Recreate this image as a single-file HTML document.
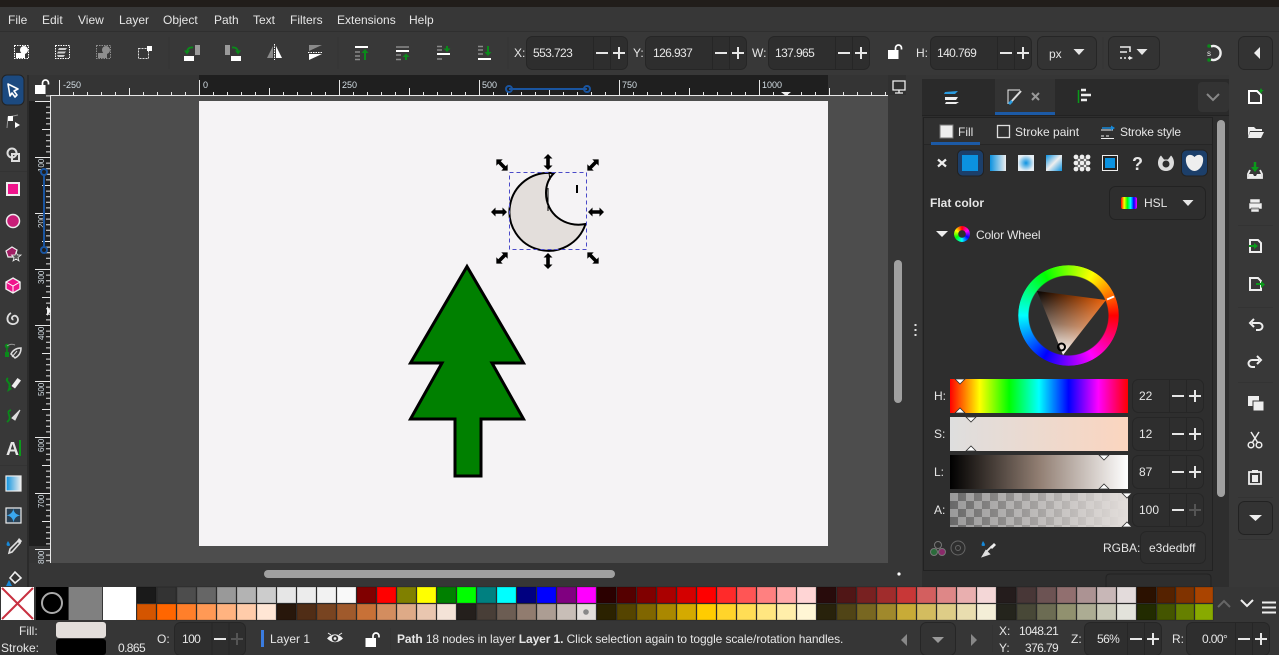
<!DOCTYPE html>
<html><head><meta charset="utf-8"><style>
html,body{margin:0;padding:0;background:#363636;width:1279px;height:655px;overflow:hidden}
svg{position:absolute;left:0;top:0;display:block}
text{font-family:"Liberation Sans",sans-serif;font-size:12px;fill:#e6e6e6}
text.n{letter-spacing:-.6px}
.r text{font-size:9px;fill:#d5dfe6}
.r text.v{font-size:8px}
.b{stroke:#262626;fill:#2e2e2e}
.wheel{position:absolute;border-radius:50%}
</style></head><body>
<svg width="1279" height="655" viewBox="0 0 1279 655">
<defs>
<pattern id="hr" width="140" height="20" patternUnits="userSpaceOnUse" x="59" y="75"><path d="M.5 5V20M14.5 17V20M28.5 17V20M42.5 17V20M56.5 17V20M70.5 13V20M84.5 17V20M98.5 17V20M112.5 17V20M126.5 17V20" stroke="#e8e8e8" fill="none"/></pattern>
<pattern id="vr" width="21" height="56" patternUnits="userSpaceOnUse" x="29" y="101"><path d="M6 .5H21M17 6.1H21M17 11.7H21M17 17.3H21M17 22.9H21M13 28.5H21M17 34.1H21M17 39.7H21M17 45.3H21M17 50.9H21" stroke="#e8e8e8" fill="none"/></pattern>
<pattern id="ck" width="16" height="16" patternUnits="userSpaceOnUse" x="950" y="493"><rect width="16" height="16" fill="#9a9a9a"/><rect x="8" width="8" height="8" fill="#686868"/><rect y="8" width="8" height="8" fill="#686868"/></pattern>
<linearGradient id="gh" x1="0" x2="1" y1="0" y2="0"><stop offset="0" stop-color="#f00"/><stop offset=".167" stop-color="#ff0"/><stop offset=".333" stop-color="#0f0"/><stop offset=".5" stop-color="#0ff"/><stop offset=".667" stop-color="#00f"/><stop offset=".833" stop-color="#f0f"/><stop offset="1" stop-color="#f00"/></linearGradient>
<linearGradient id="gs"><stop offset="0" stop-color="#dedede"/><stop offset="1" stop-color="#fbd5bf"/></linearGradient>
<linearGradient id="gl"><stop offset="0" stop-color="#000"/><stop offset=".5" stop-color="#917e72"/><stop offset="1" stop-color="#fff"/></linearGradient>
<linearGradient id="ga"><stop offset="0" stop-color="#e3dedb" stop-opacity="0"/><stop offset="1" stop-color="#e3dedb"/></linearGradient>
<linearGradient id="lg"><stop offset="0" stop-color="#0b92e0"/><stop offset="1" stop-color="#eee"/></linearGradient>
<radialGradient id="rg"><stop offset="0" stop-color="#0b92e0"/><stop offset="1" stop-color="#e6eef4"/></radialGradient>
<linearGradient id="dg" x1="0" y1="0" x2="1" y2="1"><stop offset="0" stop-color="#0b92e0"/><stop offset=".5" stop-color="#eee"/><stop offset="1" stop-color="#0b92e0"/></linearGradient>
<linearGradient id="hs"><stop offset="0" stop-color="#f00"/><stop offset=".2" stop-color="#ff0"/><stop offset=".4" stop-color="#0f0"/><stop offset=".6" stop-color="#0ff"/><stop offset=".8" stop-color="#00f"/><stop offset="1" stop-color="#f0f"/></linearGradient>
<g id="pm" fill="none"><path d="M-34.5 -17V17M-17.5 -17V17" stroke="#262626"/><path d="M-32 0H-20M-15 0H-3M-9 -6V6" stroke="#e6e6e6" stroke-width="2"/></g>
<path id="ar" d="M-8 0L-3.5 -4.5V-1.8H3.5V-4.5L8 0L3.5 4.5V1.8H-3.5V4.5Z" fill="#000"/>
<path id="dn" d="M-5.500 -3H5.500L0 3Z" fill="#e6e6e6"/>
<path id="mkd" d="M-5 0H5L0 5Z" fill="#fff" stroke="#333" stroke-width=".8"/>
<path id="mku" d="M-5 0H5L0 -5Z" fill="#fff" stroke="#333" stroke-width=".8"/>
<g id="lock"><rect x="-5.500" y="-3" width="10.500" height="9" fill="#fff"/><path d="M2 -3V-5A3 3 0 0 1 8 -5V-3.500" fill="none" stroke="#fff" stroke-width="1.700"/></g>
</defs>

<!-- chrome -->
<rect width="1279" height="655" fill="#363636"/>
<rect width="1279" height="7" fill="#211d1a"/>
<rect y="7" width="1279" height="24" fill="#373737"/>
<rect y="31" width="1279" height="1" fill="#2f2f2f"/>
<rect y="32" width="1279" height="43" fill="#383838"/>
<path d="M169 37V69M338 37V69M508 37V69M1103 37V69" stroke="#333" stroke-width="1"/>
<g>
<text x="8" y="24">File</text><text x="42" y="24">Edit</text><text x="78" y="24">View</text><text x="119" y="24">Layer</text><text x="163" y="24">Object</text><text x="214" y="24">Path</text><text x="253" y="24">Text</text><text x="290" y="24">Filters</text><text x="337" y="24">Extensions</text><text x="409" y="24">Help</text>
</g>

<!-- toolbar icons -->
<g fill="none">
<rect x="14.500" y="45.500" width="14" height="13" stroke="#fff" stroke-dasharray="1.500 1"/><circle cx="24" cy="50" r="4" fill="#fff"/><rect x="16" y="53" width="9" height="5" fill="#fff"/>
<rect x="55.500" y="45.500" width="14" height="13" stroke="#fff" stroke-dasharray="1.500 1"/><path d="M59 48H67L65.500 50H58ZM58 51.500H66L64.500 53.500H57ZM57 55H65L63.500 57H58Z" fill="#ccc"/>
<rect x="96.500" y="45.500" width="14" height="13" stroke="#8d8d8d" stroke-dasharray="1.500 1"/><circle cx="106" cy="50" r="4" fill="#8d8d8d"/><rect x="98" y="53" width="9" height="5" fill="#8d8d8d"/>
<rect x="138.500" y="48.500" width="10" height="10" stroke="#ddd" stroke-dasharray="2 1"/><rect x="147" y="46" width="5" height="5" fill="#fff"/>
<rect x="195" y="45" width="5" height="10" fill="#9a9a9a"/><rect x="184" y="56" width="10" height="5" fill="#fff"/><path d="M193 47.500C189 47 187 49 187 53" stroke="#0a8a1a" stroke-width="1.800"/><path d="M184 50.500H190L187 54.500Z" fill="#0a8a1a"/>
<rect x="225" y="45" width="5" height="10" fill="#9a9a9a"/><rect x="231" y="56" width="10" height="5" fill="#fff"/><path d="M232 47.500C236 47 238 49 238 53" stroke="#0a8a1a" stroke-width="1.800"/><path d="M235 50.500H241L238 54.500Z" fill="#0a8a1a"/>
<path d="M267 58L273 46V58Z" fill="#8a8a8a"/><path d="M276 46L282 58H276Z" fill="#fff"/><path d="M274.500 44V60" stroke="#fff" stroke-dasharray="1.500 1"/>
<path d="M309 45H322L309 51Z" fill="#8a8a8a"/><path d="M309 54H322L309 60Z" fill="#fff"/><path d="M308 52.500H323" stroke="#fff" stroke-dasharray="1.500 1"/>
<path d="M355 47H368" stroke="#fff" stroke-width="2"/><path d="M355 52H360M355 56H360M355 59.500H360" stroke="#8a8a8a" stroke-width="1.500"/><path d="M365 60V52" stroke="#0a8a1a" stroke-width="2"/><path d="M361.500 53L365 49L368.500 53Z" fill="#0a8a1a"/>
<path d="M396 51H409" stroke="#fff" stroke-width="2"/><path d="M396 47H409M396 55H401M396 59.500H401" stroke="#8a8a8a" stroke-width="1.500"/><path d="M406 60V56" stroke="#0a8a1a" stroke-width="2"/><path d="M402.500 57L406 53.500L409.500 57Z" fill="#0a8a1a"/>
<path d="M437 54H450" stroke="#fff" stroke-width="2"/><path d="M437 46.500H442M437 50H442M437 59H442" stroke="#8a8a8a" stroke-width="1.500"/><path d="M447 46V49" stroke="#0a8a1a" stroke-width="2"/><path d="M443.500 48.500L447 52L450.500 48.500Z" fill="#0a8a1a"/>
<path d="M478 59H491" stroke="#fff" stroke-width="2"/><path d="M478 46.500H483M478 50H483M478 54H483" stroke="#8a8a8a" stroke-width="1.500"/><path d="M488 46V53" stroke="#0a8a1a" stroke-width="2"/><path d="M484.500 52L488 56L491.500 52Z" fill="#0a8a1a"/>
</g>

<!-- toolbar fields -->
<text x="514" y="57">X:</text>
<rect class="b" x="526.500" y="36.500" width="101" height="33" rx="6"/><use href="#pm" x="628" y="53"/><text class="n" x="533" y="57">553.723</text>
<text x="633" y="57">Y:</text>
<rect class="b" x="645.500" y="36.500" width="101" height="33" rx="6"/><use href="#pm" x="747" y="53"/><text class="n" x="653" y="57">126.937</text>
<text x="752" y="57">W:</text>
<rect class="b" x="768.500" y="36.500" width="101" height="33" rx="6"/><use href="#pm" x="870" y="53"/><text class="n" x="775" y="57">137.965</text>
<use href="#lock" x="893.500" y="53"/>
<text x="916" y="57">H:</text>
<rect class="b" x="930.500" y="36.500" width="101" height="33" rx="6"/><use href="#pm" x="1032" y="53"/><text class="n" x="937" y="57">140.769</text>
<rect class="b" x="1037.500" y="36.500" width="59" height="33" rx="6" style="fill:#333"/><text x="1049" y="58">px</text><use href="#dn" x="1079" y="52"/>
<rect class="b" x="1108.500" y="36.500" width="51" height="33" rx="6" style="fill:#333"/><path d="M1120 47H1130V52M1120 52H1127M1120 58H1122M1124 58H1126M1128 58H1130" stroke="#eee" stroke-width="1.500" fill="none"/><path d="M1129 56L1133 58L1129 60Z" fill="#eee"/><use href="#dn" x="1142" y="52"/>
<path d="M1211 46.500A7 7 0 1 1 1211 59.500" stroke="#eee" stroke-width="2.400" fill="none"/><circle cx="1209" cy="46" r="1.800" fill="#0a8a1a"/><circle cx="1209" cy="60" r="1.800" fill="#0a8a1a"/><text x="1207" y="56" style="font-size:8px">s</text>
<rect class="b" x="1238.500" y="36.500" width="34" height="33" rx="6" style="fill:#333"/><path d="M1260 47V59L1254 53Z" fill="#eee"/>

<!-- canvas -->
<rect x="50" y="95" width="838" height="468" fill="#4d4d4d"/>
<rect x="199" y="101" width="629" height="445" fill="#f5f3f5"/>

<!-- rulers -->
<rect x="29" y="75" width="859" height="20" fill="#343434"/>
<rect x="199" y="75" width="629" height="20" fill="#1f1f1f"/>
<rect x="50" y="75" width="838" height="20" fill="url(#hr)"/>
<rect x="50" y="95" width="838" height="1" fill="#e8e8e8"/>
<rect x="29" y="95" width="21" height="468" fill="#343434"/>
<rect x="29" y="101" width="21" height="445" fill="#1f1f1f"/>
<rect x="29" y="95" width="21" height="468" fill="url(#vr)"/>
<rect x="50" y="95" width="1" height="468" fill="#e8e8e8"/>
<g class="r"><text x="63" y="88">-250</text><text x="203" y="88">0</text><text x="342" y="88">250</text><text x="482" y="88">500</text><text x="622" y="88">750</text><text x="762" y="88">1000</text>
<text class="v" transform="translate(44 172) rotate(-90)">100</text><text class="v" transform="translate(44 228) rotate(-90)">200</text><text class="v" transform="translate(44 284) rotate(-90)">300</text><text class="v" transform="translate(44 340) rotate(-90)">400</text><text class="v" transform="translate(44 396) rotate(-90)">500</text><text class="v" transform="translate(44 452) rotate(-90)">600</text><text class="v" transform="translate(44 508) rotate(-90)">700</text><text class="v" transform="translate(44 564) rotate(-90)">800</text></g>
<path d="M781 92H791L786 96Z" fill="#eee"/><path d="M47 306V316L51 311Z" fill="#eee"/>
<path d="M509 89H587" stroke="#1a55a0" stroke-width="2"/><circle cx="509" cy="89" r="3" fill="none" stroke="#1a55a0" stroke-width="2"/><circle cx="587" cy="89" r="3" fill="none" stroke="#1a55a0" stroke-width="2"/>
<path d="M44 172V250" stroke="#1a55a0" stroke-width="2"/><circle cx="44" cy="172" r="3" fill="#1f1f1f" stroke="#1a55a0" stroke-width="2"/><circle cx="44" cy="250" r="3" fill="#1f1f1f" stroke="#1a55a0" stroke-width="2"/>
<use href="#lock" x="40.500" y="88"/>

<!-- drawing -->
<path d="M467 266.500L523.500 363H492L523.500 419H481V476H455V419H410.500L442 363H410.500Z" fill="#008000" stroke="#000" stroke-width="3" stroke-linejoin="miter"/>
<path d="M552 173A39 39 0 1 0 585.500 224C565 228 546 214 546 193C546 184 549 178 554 173Z" fill="#e3dedb" stroke="#000" stroke-width="2"/>
<path d="M549 173L550 180M548 188V211" stroke="#000" stroke-width="1" fill="none"/>
<path d="M577 185V193" stroke="#000" stroke-width="2"/>
<rect x="509.500" y="172.500" width="77" height="77" fill="none" stroke="#4a4ac8" stroke-dasharray="4 3"/>
<use href="#ar" transform="translate(502 165) rotate(45)"/><use href="#ar" transform="translate(548 162) rotate(90)"/><use href="#ar" transform="translate(593 165) rotate(-45)"/><use href="#ar" x="499" y="212"/><use href="#ar" x="596" y="212"/><use href="#ar" transform="translate(502 258) rotate(-45)"/><use href="#ar" transform="translate(548 261) rotate(90)"/><use href="#ar" transform="translate(593 258) rotate(45)"/>

<!-- left toolbar -->
<rect x="0" y="75" width="27" height="512" fill="#383838"/>
<rect x="27" y="75" width="2" height="512" fill="#2b2b2b"/>
<path d="M0 171.500H27M0 465.500H27" stroke="#333"/>
<rect x="2" y="75" width="22" height="30" rx="5" fill="#1c4a80" stroke="#222"/>
<path d="M8 84L18 89L14 91L17 95L15 97L12 93L10 96Z" fill="none" stroke="#fff" stroke-width="1.600" stroke-linejoin="round"/>
<g fill="none">
<path d="M7 128L8 117Q13 116 18 115" stroke="#999"/><rect x="8" y="116" width="5" height="5" fill="#fff"/><path d="M15 122V128L20 125Z" fill="#fff"/>
<circle cx="12" cy="153" r="4.500" stroke="#ddd" stroke-width="2"/><rect x="12" y="154" width="7" height="7" stroke="#ddd" stroke-width="2"/>
<rect x="7" y="183" width="12" height="12" fill="#f0148c" stroke="#eee" stroke-width="2"/>
<circle cx="13" cy="221" r="6.500" fill="#c81e78" stroke="#eee" stroke-width="1.500"/>
<path d="M6 251L12 247L17 250L15 257L8 257Z" fill="#a01e64" stroke="#eee" stroke-width="1.200"/><path d="M16 252L17.500 255H21L18 257.500L19 261L16 259L13 261L14 257.500L11.500 255H15Z" fill="#555" stroke="#eee" stroke-width=".8"/>
<path d="M13 278L20 282V289L13 293L6 289V282Z" fill="#f0148c" stroke="#eee" stroke-width="1.400"/><path d="M6 282L13 286L20 282M13 286V293" stroke="#fff"/>
<path d="M13.500 319.500a1.500 1.500 0 0 1-1.500-2 3 3 0 0 1 4-1.500 4.500 4.500 0 0 1 1 6.500 6 6 0 0 1-9-1 6.500 6.500 0 0 1 3-8.500" stroke="#ddd" stroke-width="1.800"/>
<path d="M7 346V356" stroke="#0a8a1a" stroke-width="1.500"/><rect x="5" y="352" width="4" height="5" fill="#0a8a1a"/><circle cx="7" cy="346" r="2.200" fill="#0a8a1a"/><path d="M7 346Q11 343 15 345" stroke="#999"/><path d="M11 354Q14 348 21 348Q21 355 15 358Z" stroke="#ddd" stroke-width="1.500"/><path d="M12 357L17 351" stroke="#ddd"/>
<path d="M8 378C4 381 12 383 9 387" stroke="#0a8a1a" stroke-width="2"/><path d="M11.500 386L17.500 378L21 380.500L15 388.500Z" fill="#eee"/><path d="M7 392L9 386L12 389Z" fill="#0a8a1a"/>
<path d="M11 410C4 412 14 417 7 422" stroke="#0a8a1a" stroke-width="1.800"/><path d="M12 418L20 410L15 420Z" fill="#ddd" stroke="#ddd"/>
<path d="M20 440V456" stroke="#0a9a1a" stroke-width="2"/>
<rect x="6" y="476" width="15" height="15" fill="url(#lg)" stroke="#eee" stroke-width="1.200"/>
<rect x="6" y="508" width="15" height="15" fill="#2a4256" stroke="#eee" stroke-width="1.200"/><path d="M13.500 508.500Q13.500 514 20.500 515.500Q14.500 516 13.500 522.500Q12.500 516 6.500 515.500Q12.500 514 13.500 508.500Z" fill="#3aa8f0"/>
<path d="M10 549L18 541L20 543L12 552L9 553Z" stroke="#ddd" stroke-width="1.600"/><path d="M17 541L19 538L22 541L20 544Z" fill="#ddd"/><path d="M8 541C6 544 6 546 8.500 546C11 546 10 544 8 541Z" fill="#1688d8"/>
<path d="M10 578L15 572L21 578L15 583Z" stroke="#eee" stroke-width="1.600" fill="#333"/><path d="M6 586L9 580L12 586Z" fill="#1688d8"/>
</g>
<text x="6" y="455" style="font-size:18px;font-weight:bold">A</text>

<!-- scrollbars -->
<rect x="888" y="75" width="34" height="512" fill="#363636"/>
<rect x="888" y="75" width="18" height="20" fill="#303030"/>
<path d="M893 81H905V90H893ZM899 90V93M895 93H903" fill="none" stroke="#eee" stroke-width="1.300"/>
<rect x="894" y="260" width="8" height="143" rx="4" fill="#a0a0a0"/>
<rect x="264" y="570" width="351" height="8" rx="4" fill="#a0a0a0"/>
<circle cx="899" cy="574" r="1.600" fill="#fff"/>
<g fill="#ddd"><rect x="914.500" y="324" width="2" height="2"/><rect x="914.500" y="329" width="2" height="2"/><rect x="914.500" y="334" width="2" height="2"/></g>

<!-- panel -->
<rect x="922" y="79" width="307" height="508" fill="#2e2e2e"/>
<rect x="1229" y="75" width="50" height="512" fill="#383838"/>
<rect x="922" y="79" width="73" height="36" fill="#2a2a2a"/><rect x="995" y="79" width="60" height="36" fill="#333"/><rect x="1055" y="79" width="174" height="36" fill="#2a2a2a"/>
<rect x="995" y="112" width="60" height="4" fill="#1c5aa6"/>
<rect x="922" y="115" width="307" height="1" fill="#222"/>
<rect x="1198" y="82" width="31" height="30" rx="4" fill="#333"/><path d="M1207 94L1213 100L1219 94" fill="none" stroke="#888" stroke-width="2"/>
<path d="M945 92L958 91L955 94H944Z" fill="#2a9ce0"/><path d="M945 97H958L956 100H945ZM946 102H959L956 104H945Z" fill="#eee"/>
<g fill="none"><path d="M1020 90H1008V104" stroke="#eee"/><path d="M1011 102L1021 91" stroke="#ddd" stroke-width="2"/><path d="M1008 103L1011 100L1013 102L1010 105Z" fill="#2a9ce0"/><path d="M1032 93L1039 100M1039 93L1032 100" stroke="#999" stroke-width="2"/>
<path d="M1078.500 90V103" stroke="#0a9a1a" stroke-width="1.500"/><path d="M1081 90H1086M1081 95H1091M1081 100H1087" stroke="#eee" stroke-width="2.500"/></g>
<rect x="923.500" y="117.500" width="289" height="453" fill="#2e2e2e" stroke="#222"/>
<rect x="924" y="118" width="288" height="26" fill="#303030"/>
<rect x="924" y="144" width="288" height="1" fill="#262626"/>
<rect x="931" y="142" width="49" height="3" fill="#1c5aa6"/>
<rect x="940" y="125" width="13" height="13" fill="#eee" stroke="#777"/><text x="958" y="136">Fill</text>
<rect x="997.500" y="125.500" width="12" height="12" fill="none" stroke="#ddd" stroke-width="1.300"/><text x="1015" y="136">Stroke paint</text>
<path d="M1101 130H1113M1101 136H1104M1106 136H1109M1101 138.500H1114" stroke="#eee"/><path d="M1102 128H1112" stroke="#1688d8" stroke-width="1.500"/><path d="M1111 125.500L1115 128L1111 130.500Z" fill="#1688d8"/><text x="1120" y="136" style="letter-spacing:-.15px">Stroke style</text>
<rect x="1217" y="120" width="8" height="377" rx="4" fill="#a0a0a0"/>

<!-- paint buttons -->
<path d="M938 159.500L946 166.500M946 159.500L938 166.500" stroke="#eee" stroke-width="2.200"/>
<rect x="957.500" y="150" width="26" height="26" rx="5" fill="#1c3f6a" stroke="#222"/><rect x="962" y="155" width="16" height="16" fill="#0b92e0"/>
<rect x="990" y="155" width="16" height="16" fill="url(#lg)"/>
<rect x="1018" y="155" width="16" height="16" fill="url(#rg)"/>
<rect x="1046" y="155" width="16" height="16" fill="url(#dg)"/>
<g fill="#eee"><circle cx="1076" cy="157" r="2.400"/><circle cx="1082" cy="157" r="2.400"/><circle cx="1088" cy="157" r="2.400"/><circle cx="1079" cy="160" r="1.500"/><circle cx="1085" cy="160" r="1.500"/><circle cx="1076" cy="163" r="2.400"/><circle cx="1082" cy="163" r="2.400"/><circle cx="1088" cy="163" r="2.400"/><circle cx="1079" cy="166" r="1.500"/><circle cx="1085" cy="166" r="1.500"/><circle cx="1076" cy="169" r="2.400"/><circle cx="1082" cy="169" r="2.400"/><circle cx="1088" cy="169" r="2.400"/></g>
<rect x="1102.500" y="155.500" width="15" height="15" fill="#222" stroke="#eee"/><rect x="1105" y="158" width="10" height="10" fill="#0b92e0"/>
<text x="1132" y="170" style="font-size:18px;font-weight:bold">?</text>
<path fill-rule="evenodd" d="M1161 155.500C1156 160 1157 171 1166 171C1175 171 1176 160 1171 155.500L1168 159.500H1164ZM1166 160.500A3.500 3.500 0 1 0 1166 167.500A3.500 3.500 0 1 0 1166 160.500Z" fill="#ddd"/>
<rect x="1181.500" y="150" width="26" height="26" rx="5" fill="#1c3f6a" stroke="#222"/><path d="M1186 158C1187 154 1192 154 1194.500 157C1197 154 1202 154 1203 158C1204 165 1199 171 1194.500 171C1190 171 1185 165 1186 158Z" fill="#eee"/>

<text x="930" y="207" style="font-weight:bold">Flat color</text>
<rect x="1109.500" y="186.500" width="96" height="33" rx="6" fill="#2e2e2e" stroke="#222"/>
<rect x="1121" y="197" width="16" height="12" rx="2" fill="url(#hs)"/><text x="1144" y="207">HSL</text><use href="#dn" x="1188" y="203"/>
<path d="M936 231H948L942 237Z" fill="#eee"/><text x="976" y="239" style="letter-spacing:-.15px">Color Wheel</text>

<!-- sliders -->
<rect x="950" y="379" width="178" height="34" fill="url(#gh)"/>
<rect x="950" y="417" width="178" height="34" fill="url(#gs)"/>
<rect x="950" y="455" width="178" height="34" fill="url(#gl)"/>
<rect x="950" y="493" width="178" height="34" fill="url(#ck)"/><rect x="950" y="493" width="178" height="34" fill="url(#ga)"/>
<use href="#mkd" x="960" y="379"/><use href="#mku" x="960" y="413"/><use href="#mkd" x="971" y="417"/><use href="#mku" x="971" y="451"/><use href="#mkd" x="1104" y="455"/><use href="#mku" x="1104" y="489"/><use href="#mkd" x="1127" y="493"/><use href="#mku" x="1127" y="527"/>
<text x="934" y="400">H:</text><text x="934" y="438">S:</text><text x="934" y="476">L:</text><text x="934" y="514">A:</text>
<rect class="b" x="1132.500" y="379.500" width="71" height="33" rx="6"/><use href="#pm" x="1204" y="396"/><text x="1139" y="400">22</text>
<rect class="b" x="1132.500" y="417.500" width="71" height="33" rx="6"/><use href="#pm" x="1204" y="434"/><text x="1139" y="438">12</text>
<rect class="b" x="1132.500" y="455.500" width="71" height="33" rx="6"/><use href="#pm" x="1204" y="472"/><text x="1139" y="476">87</text>
<rect class="b" x="1132.500" y="493.500" width="71" height="33" rx="6"/><path d="M1169.500 493V527M1186.500 493V527" stroke="#262626"/><path d="M1172 510H1184" stroke="#e6e6e6" stroke-width="2"/><path d="M1189 510H1201M1195 504V516" stroke="#555" stroke-width="2"/><text x="1139" y="514">100</text>
<circle cx="938" cy="545" r="3.500" fill="none" stroke="#777"/><circle cx="934" cy="552" r="3.500" fill="#2a6a3a" stroke="#777"/><circle cx="942" cy="552" r="3.500" fill="#8a2a6a" stroke="#777"/>
<circle cx="958" cy="548" r="7" fill="none" stroke="#666"/><circle cx="958" cy="548" r="2.500" fill="none" stroke="#666"/>
<path d="M984 554L992 546M983 556L986 551L989 554Z" stroke="#ddd" stroke-width="1.800" fill="#eee"/><path d="M990 547L994 543L996 545L992 549Z" fill="#eee"/><path d="M983 541C981 545 981 546 983.500 546C986 546 985 544 983 541Z" fill="#1688d8"/>
<text x="1103" y="552">RGBA:</text><rect class="b" x="1140.500" y="531.500" width="65" height="32" rx="6"/><text x="1149" y="552">e3dedbff</text>
<path d="M1106 587V578Q1106 574 1110 574H1207Q1211 574 1211 578V587" fill="none" stroke="#222"/>

<!-- right toolbar -->
<g fill="none">
<path d="M1249 91H1257L1261 95V103H1249Z" stroke="#fff" stroke-width="2"/><path d="M1261 88L1262 90L1264 90.500L1262 91.500L1261 94L1260 91.500L1258 90.500L1260 90Z" fill="#0a9a1a"/>
<path d="M1248 127H1254L1256 129H1262V131H1250L1248 137V127ZM1250 132H1264L1261 138H1248Z" fill="#eee"/>
<path d="M1255 162V170" stroke="#0a9a1a" stroke-width="2.500"/><path d="M1251 167H1259L1255 172Z" fill="#0a9a1a"/><path d="M1250 170L1248 174V178H1262V174L1260 170" stroke="#eee" stroke-width="1.800"/><path d="M1249 174H1253L1254 176H1256L1257 174H1261V178H1249Z" fill="#eee"/>
<path d="M1250 199H1260V203H1250ZM1249 203H1262V209H1249ZM1251 208H1259V212H1251Z" fill="#eee" stroke="#383838" stroke-width=".5"/>
<path d="M1250 240H1258L1261 243V252H1250Z" stroke="#eee" stroke-width="2"/><path d="M1249 246H1255" stroke="#0a9a1a" stroke-width="2"/><path d="M1254 243L1258 246L1254 249Z" fill="#0a9a1a"/>
<path d="M1250 278H1258L1261 281V290H1250Z" stroke="#eee" stroke-width="2"/><path d="M1256 284H1262" stroke="#0a9a1a" stroke-width="2"/><path d="M1261 281L1265 284.500L1261 288Z" fill="#0a9a1a"/>
<path d="M1252 323H1259A3.500 3.500 0 0 1 1259 330H1256" stroke="#eee" stroke-width="2"/><path d="M1254 319L1250 323L1254 327" stroke="#eee" stroke-width="2"/>
<path d="M1259 360H1252A3.500 3.500 0 0 0 1252 367H1255" stroke="#eee" stroke-width="2"/><path d="M1257 356L1261 360L1257 364" stroke="#eee" stroke-width="2"/>
<rect x="1248" y="396" width="11" height="10" fill="#eee"/><rect x="1253" y="401" width="11" height="10" fill="#eee" stroke="#383838"/>
<circle cx="1251" cy="445" r="2.800" stroke="#eee" stroke-width="1.500"/><circle cx="1259" cy="445" r="2.800" stroke="#eee" stroke-width="1.500"/><path d="M1252 443L1259 432M1258 443L1251 432" stroke="#eee" stroke-width="1.500"/>
<path d="M1249 472H1261V484H1249Z" stroke="#eee" stroke-width="1.800"/><rect x="1252" y="470" width="6" height="3" fill="#eee"/><rect x="1252" y="475" width="6" height="7" fill="#eee"/>
<path d="M1238 225.500H1273M1238 307.500H1273M1238 382.500H1273M1238 497.500H1273M1238 539.500H1273" stroke="#333"/>
</g>
<rect x="1238.500" y="501.500" width="34" height="33" rx="6" fill="#333" stroke="#222"/><path d="M1249 515H1262L1255.500 521Z" fill="#eee"/>

<!-- palette -->
<rect x="1" y="587" width="33" height="33" fill="#fff"/><path d="M2 588L33 619M33 588L2 619" stroke="#c83040" stroke-width="2"/>
<rect x="36" y="587" width="32" height="33" fill="#000"/><circle cx="52" cy="603" r="10" fill="none" stroke="#aaa" stroke-width="2"/>
<rect x="69" y="587" width="33" height="33" fill="#808080"/><rect x="103" y="587" width="33" height="33" fill="#fff"/>
<g stroke="#00000033">
<rect x="137" y="587" width="19" height="16" fill="#1a1a1a"/><rect x="157" y="587" width="19" height="16" fill="#333333"/><rect x="177" y="587" width="19" height="16" fill="#4d4d4d"/><rect x="197" y="587" width="19" height="16" fill="#666666"/><rect x="217" y="587" width="19" height="16" fill="#999999"/><rect x="237" y="587" width="19" height="16" fill="#b3b3b3"/><rect x="257" y="587" width="19" height="16" fill="#cccccc"/><rect x="277" y="587" width="19" height="16" fill="#e6e6e6"/><rect x="297" y="587" width="19" height="16" fill="#ececec"/><rect x="317" y="587" width="19" height="16" fill="#f2f2f2"/><rect x="337" y="587" width="19" height="16" fill="#f9f9f9"/><rect x="357" y="587" width="19" height="16" fill="#800000"/><rect x="377" y="587" width="19" height="16" fill="#ff0000"/><rect x="397" y="587" width="19" height="16" fill="#808000"/><rect x="417" y="587" width="19" height="16" fill="#ffff00"/><rect x="437" y="587" width="19" height="16" fill="#008000"/><rect x="457" y="587" width="19" height="16" fill="#00ff00"/><rect x="477" y="587" width="19" height="16" fill="#008080"/><rect x="497" y="587" width="19" height="16" fill="#00ffff"/><rect x="517" y="587" width="19" height="16" fill="#000080"/><rect x="537" y="587" width="19" height="16" fill="#0000ff"/><rect x="557" y="587" width="19" height="16" fill="#800080"/><rect x="577" y="587" width="19" height="16" fill="#ff00ff"/><rect x="597" y="587" width="19" height="16" fill="#2b0000"/><rect x="617" y="587" width="19" height="16" fill="#550000"/><rect x="637" y="587" width="19" height="16" fill="#800000"/><rect x="657" y="587" width="19" height="16" fill="#aa0000"/><rect x="677" y="587" width="19" height="16" fill="#d40000"/><rect x="697" y="587" width="19" height="16" fill="#ff0000"/><rect x="717" y="587" width="19" height="16" fill="#ff2a2a"/><rect x="737" y="587" width="19" height="16" fill="#ff5555"/><rect x="757" y="587" width="19" height="16" fill="#ff8080"/><rect x="777" y="587" width="19" height="16" fill="#ffaaaa"/><rect x="797" y="587" width="19" height="16" fill="#ffd5d5"/><rect x="817" y="587" width="19" height="16" fill="#280b0b"/><rect x="837" y="587" width="19" height="16" fill="#501616"/><rect x="857" y="587" width="19" height="16" fill="#782121"/><rect x="877" y="587" width="19" height="16" fill="#a02c2c"/><rect x="897" y="587" width="19" height="16" fill="#c83737"/><rect x="917" y="587" width="19" height="16" fill="#d35f5f"/><rect x="937" y="587" width="19" height="16" fill="#de8787"/><rect x="957" y="587" width="19" height="16" fill="#e9afaf"/><rect x="977" y="587" width="19" height="16" fill="#f4d7d7"/><rect x="997" y="587" width="19" height="16" fill="#241c1c"/><rect x="1017" y="587" width="19" height="16" fill="#483737"/><rect x="1037" y="587" width="19" height="16" fill="#6c5353"/><rect x="1057" y="587" width="19" height="16" fill="#916f6f"/><rect x="1077" y="587" width="19" height="16" fill="#ac9393"/><rect x="1097" y="587" width="19" height="16" fill="#c8b7b7"/><rect x="1117" y="587" width="19" height="16" fill="#e3dbdb"/><rect x="1137" y="587" width="19" height="16" fill="#2b1100"/><rect x="1157" y="587" width="18" height="16" fill="#552200"/><rect x="1176" y="587" width="18" height="16" fill="#803300"/><rect x="1195" y="587" width="18" height="16" fill="#aa4400"/>
<rect x="137" y="604" width="19" height="16" fill="#d45500"/><rect x="157" y="604" width="19" height="16" fill="#ff6600"/><rect x="177" y="604" width="19" height="16" fill="#ff7f2a"/><rect x="197" y="604" width="19" height="16" fill="#ff9955"/><rect x="217" y="604" width="19" height="16" fill="#ffb380"/><rect x="237" y="604" width="19" height="16" fill="#ffccaa"/><rect x="257" y="604" width="19" height="16" fill="#ffe6d5"/><rect x="277" y="604" width="19" height="16" fill="#28170b"/><rect x="297" y="604" width="19" height="16" fill="#502d16"/><rect x="317" y="604" width="19" height="16" fill="#784421"/><rect x="337" y="604" width="19" height="16" fill="#a05a2c"/><rect x="357" y="604" width="19" height="16" fill="#c87137"/><rect x="377" y="604" width="19" height="16" fill="#d38d5f"/><rect x="397" y="604" width="19" height="16" fill="#deaa87"/><rect x="417" y="604" width="19" height="16" fill="#e9c6af"/><rect x="437" y="604" width="19" height="16" fill="#f4e3d7"/><rect x="457" y="604" width="19" height="16" fill="#241f1c"/><rect x="477" y="604" width="19" height="16" fill="#483e37"/><rect x="497" y="604" width="19" height="16" fill="#6c5d53"/><rect x="517" y="604" width="19" height="16" fill="#917c6f"/><rect x="537" y="604" width="19" height="16" fill="#ac9d93"/><rect x="557" y="604" width="19" height="16" fill="#c8beb7"/><rect x="577" y="604" width="19" height="16" fill="#e3dedb"/><rect x="597" y="604" width="19" height="16" fill="#2b2200"/><rect x="617" y="604" width="19" height="16" fill="#554400"/><rect x="637" y="604" width="19" height="16" fill="#806600"/><rect x="657" y="604" width="19" height="16" fill="#aa8800"/><rect x="677" y="604" width="19" height="16" fill="#d4aa00"/><rect x="697" y="604" width="19" height="16" fill="#ffcc00"/><rect x="717" y="604" width="19" height="16" fill="#ffd42a"/><rect x="737" y="604" width="19" height="16" fill="#ffdd55"/><rect x="757" y="604" width="19" height="16" fill="#ffe680"/><rect x="777" y="604" width="19" height="16" fill="#ffeeaa"/><rect x="797" y="604" width="19" height="16" fill="#fff6d5"/><rect x="817" y="604" width="19" height="16" fill="#28220b"/><rect x="837" y="604" width="19" height="16" fill="#504416"/><rect x="857" y="604" width="19" height="16" fill="#786721"/><rect x="877" y="604" width="19" height="16" fill="#a0892c"/><rect x="897" y="604" width="19" height="16" fill="#c8ab37"/><rect x="917" y="604" width="19" height="16" fill="#d3bc5f"/><rect x="937" y="604" width="19" height="16" fill="#decd87"/><rect x="957" y="604" width="19" height="16" fill="#e9ddaf"/><rect x="977" y="604" width="19" height="16" fill="#f4eed7"/><rect x="997" y="604" width="19" height="16" fill="#24241c"/><rect x="1017" y="604" width="19" height="16" fill="#484837"/><rect x="1037" y="604" width="19" height="16" fill="#6c6c53"/><rect x="1057" y="604" width="19" height="16" fill="#91916f"/><rect x="1077" y="604" width="19" height="16" fill="#acac93"/><rect x="1097" y="604" width="19" height="16" fill="#c8c8b7"/><rect x="1117" y="604" width="19" height="16" fill="#e3e3db"/><rect x="1137" y="604" width="19" height="16" fill="#222b00"/><rect x="1157" y="604" width="18" height="16" fill="#445500"/><rect x="1176" y="604" width="18" height="16" fill="#668000"/><rect x="1195" y="604" width="18" height="16" fill="#88aa00"/>
</g>
<circle cx="586" cy="612" r="2.800" fill="#888"/>
<path d="M1218 607L1224 601L1230 607" fill="none" stroke="#666" stroke-width="2"/><path d="M1241 600L1247 606L1253 600" fill="none" stroke="#eee" stroke-width="2"/>
<path d="M1262 602.500H1276M1262 607.500H1276M1262 612.500H1276" stroke="#eee" stroke-width="2"/>

<!-- status bar -->
<text x="19" y="635">Fill:</text><text x="1" y="652">Stroke:</text>
<rect x="56" y="622" width="50" height="16" rx="3" fill="#e3dedb"/><rect x="56" y="639" width="50" height="16" rx="3" fill="#000"/>
<text class="n" x="118" y="652">0.865</text>
<text x="157" y="643">O:</text>
<rect class="b" x="174.500" y="622.500" width="71" height="33" rx="6"/><path d="M212 622V655M229 622V655" stroke="#262626"/><path d="M214 639H226" stroke="#e6e6e6" stroke-width="2"/><path d="M231 639H243M237 633V645" stroke="#555" stroke-width="2"/><text class="n" x="182" y="643">100</text>
<rect x="261" y="630" width="3" height="17" fill="#3a7ce0"/><text x="270" y="643">Layer 1</text>
<path d="M327 638.500Q335 630 343 638.500Q335 646 327 638.500Z" fill="#eee"/><circle cx="335" cy="638.500" r="3.200" fill="#333"/><circle cx="335" cy="638.500" r="1.400" fill="#eee"/><path d="M328 633L331 635M342 633L339 635" stroke="#eee"/>
<use href="#lock" x="371" y="641"/>
<path d="M390.500 628V650" stroke="#333"/>
<text x="397" y="643" xml:space="preserve" style="letter-spacing:-.1px"><tspan font-weight="bold">Path</tspan> 18 nodes in layer <tspan font-weight="bold">Layer 1.</tspan> Click selection again to toggle scale/rotation handles.</text>
<path d="M907 634V646L901 640Z" fill="#888"/>
<rect class="b" x="920.500" y="622.500" width="35" height="33" rx="6" style="fill:#333"/><path d="M932 637H944L938 643Z" fill="#999"/>
<path d="M971 634V646L977 640Z" fill="#888"/>
<path d="M992.500 625V652" stroke="#333"/>
<text x="999" y="635">X:</text><text class="n" x="1019" y="635">1048.21</text><text x="999" y="652">Y:</text><text class="n" x="1025" y="652">376.79</text>
<text x="1071" y="643">Z:</text>
<rect class="b" x="1084.500" y="622.500" width="77" height="33" rx="6"/><use href="#pm" x="1162" y="639"/><text class="n" x="1097" y="643">56%</text>
<text x="1172" y="643">R:</text>
<rect class="b" x="1186.500" y="622.500" width="83" height="33" rx="6"/><use href="#pm" x="1270" y="639"/><text class="n" x="1202" y="643">0.00°</text>
</svg>

<div class="wheel" style="left:954px;top:226px;width:16px;height:16px;background:conic-gradient(red,magenta,blue,cyan,lime,yellow,red);-webkit-mask:radial-gradient(circle,transparent 3.500px,#000 4px)"></div>
<div class="wheel" style="left:1018px;top:265px;width:101px;height:101px;background:conic-gradient(from 90deg,#f00,#f0f,#00f,#0ff,#0f0,#ff0,#f00);-webkit-mask:radial-gradient(circle,transparent 39.500px,#000 40.500px,#000 50px,transparent 50.500px)"></div>
<svg width="1279" height="655" viewBox="0 0 1279 655" style="pointer-events:none">
<defs>
<linearGradient id="t1" gradientUnits="userSpaceOnUse" x1="1037" y1="291" x2="1106" y2="300"><stop offset="0" stop-color="#000"/><stop offset="1" stop-color="#f0640a"/></linearGradient>
<linearGradient id="t2" gradientUnits="userSpaceOnUse" x1="1063" y1="355" x2="1071" y2="295"><stop offset="0" stop-color="#fff"/><stop offset=".5" stop-color="#fff" stop-opacity=".38"/><stop offset="1" stop-color="#fff" stop-opacity="0"/></linearGradient>
</defs>
<path d="M1037 291L1106 300L1063 355Z" fill="url(#t1)"/><path d="M1037 291L1106 300L1063 355Z" fill="url(#t2)"/>
<path d="M1107 299.500L1114 296.500" stroke="#fff" stroke-width="2"/>
<circle cx="1061.500" cy="347" r="3.500" fill="none" stroke="#000" stroke-width="2"/>
</svg>
</body></html>
